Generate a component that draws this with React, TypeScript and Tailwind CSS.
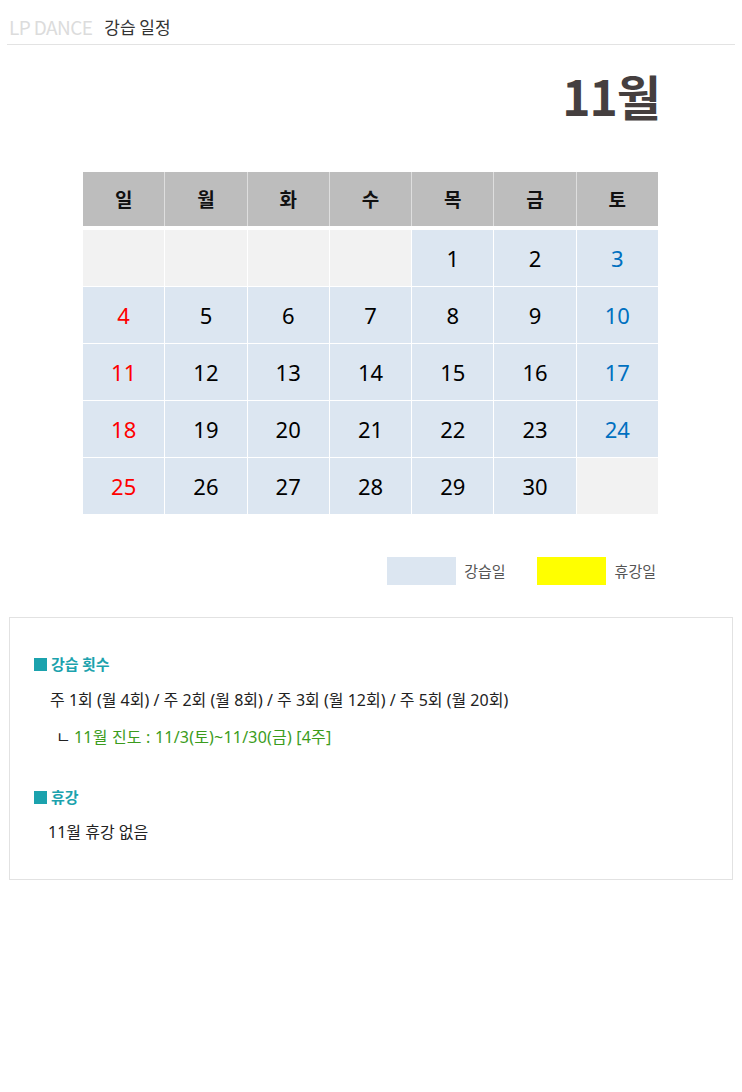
const font = { fontFamily: '"Noto Sans CJK KR", "Noto Sans", sans-serif' };
const bodyFont = { fontFamily: '"Noto Sans", "Noto Sans CJK KR", sans-serif' };

const days = ["일", "월", "화", "수", "목", "금", "토"];

// null = 빈 칸
const weeks: (number | null)[][] = [
  [null, null, null, null, 1, 2, 3],
  [4, 5, 6, 7, 8, 9, 10],
  [11, 12, 13, 14, 15, 16, 17],
  [18, 19, 20, 21, 22, 23, 24],
  [25, 26, 27, 28, 29, 30, null],
];

const dayColor = (i: number) =>
  i === 0 ? "text-[#ff0000]" : i === 6 ? "text-[#0070c0]" : "text-black";

export default function App() {
  return (
    <div className="bg-white min-h-[1092px] w-[742px]" style={font}>
      <div className="mx-[7px] flex items-end gap-[12px] border-b border-[#e3e3e3] pb-[5px] pt-[15px] pl-[2px]">
        <span className="text-[19px] leading-[24px] tracking-[-0.6px] text-[#dcdcdc]">LP DANCE</span>
        <span className="text-[17px] leading-[24px] text-[#333]">강습 일정</span>
      </div>

      <div className="flex justify-end pr-[82px] pt-[18px]">
        <h1 className="text-[48px] font-bold leading-[64px] tracking-[-1px] text-[#453f3f]">11월</h1>
      </div>

      <div className="mx-[83px] mt-[45px] w-[575px]">
        <div className="grid grid-cols-7 gap-px bg-[#dedede]">
          {days.map((d) => (
            <div
              key={d}
              className="flex h-[54px] items-center justify-center bg-[#bdbdbd] text-[19px] font-bold text-[#111]"
            >
              {d}
            </div>
          ))}
        </div>
        <div className="mt-[4px] grid grid-cols-7 gap-px bg-white">
          {weeks.flat().map((n, i) => (
            <div
              key={i}
              className={`flex h-[56px] items-center justify-center text-[22px] ${
                n === null ? "bg-[#f2f2f2]" : "bg-[#dce6f1]"
              } ${dayColor(i % 7)}`}
              style={bodyFont}
            >
              {n}
            </div>
          ))}
        </div>
      </div>

      <div className="mt-[43px] flex items-center justify-end pr-[86px] text-[15px] text-[#555]">
        <span className="h-[28px] w-[69px] bg-[#dce6f1]" />
        <span className="ml-[8px] mr-[31px]">강습일</span>
        <span className="h-[28px] w-[69px] bg-[#ffff00]" />
        <span className="ml-[9px]">휴강일</span>
      </div>

      <div className="mx-[9px] mt-[32px] border border-[#e2e2e2] px-[24px] pb-[36px] pt-[35px] text-[16px] leading-[22px]" style={bodyFont}>
        <div className="flex items-center gap-[4px] text-[15px] font-bold text-[#1ba2ad]" style={font}>
          <span className="h-[13px] w-[13px] bg-[#1ba2ad]" />
          <span>강습 횟수</span>
        </div>
        <p className="mt-[14px] pl-[16px] text-[#222]">
          주 1회 (월 4회) / 주 2회 (월 8회) / 주 3회 (월 12회) / 주 5회 (월 20회)
        </p>
        <p className="mt-[15px] pl-[22px] tracking-[0.2px] text-[#3b9c1c]">
          <span className="mr-[3px] text-[#222]">ㄴ</span>11월 진도 : 11/3(토)~11/30(금) [4주]
        </p>

        <div className="mt-[38px] flex items-center gap-[4px] text-[15px] font-bold text-[#1ba2ad]" style={font}>
          <span className="h-[13px] w-[13px] bg-[#1ba2ad]" />
          <span>휴강</span>
        </div>
        <p className="mt-[13px] pl-[14px] text-[#222]">11월 휴강 없음</p>
      </div>
    </div>
  );
}
